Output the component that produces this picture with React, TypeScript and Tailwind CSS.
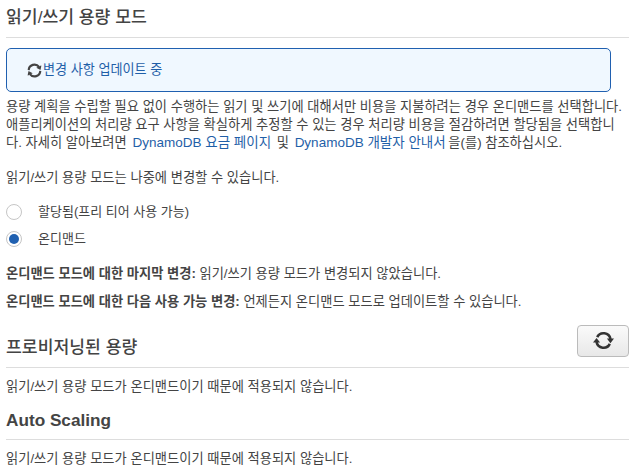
const FONT = "[font-family:'Liberation_Sans','Noto_Sans_CJK_KR',sans-serif]";

function RefreshIcon({ className }: { className: string }) {
  return (
    <svg viewBox="0 0 16 16" className={className} fill="none">
      <path d="M3.2 5.4A5.4 5.4 0 0 1 13.3 6.8" stroke="currentColor" strokeWidth="2" />
      <path d="M10.6 6.4h5.4L13.3 10z" fill="currentColor" />
      <path d="M12.8 10.6A5.4 5.4 0 0 1 2.7 9.2" stroke="currentColor" strokeWidth="2" />
      <path d="M5.4 9.6H0L2.7 6z" fill="currentColor" />
    </svg>
  );
}

function Radio({ checked, label }: { checked?: boolean; label: string }) {
  return (
    <label className="flex items-center h-[27px]">
      <span className="flex items-center justify-center w-4 h-4 rounded-full border border-[#c6c6c6] bg-white">
        {checked && <span className="w-[10px] h-[10px] rounded-full bg-[#2060b0]" />}
      </span>
      <span className="ml-4 text-[13px]">{label}</span>
    </label>
  );
}

export default function App() {
  return (
    <div className={`${FONT} w-[639px] h-[470px] overflow-hidden bg-white pl-[6px] pr-[10px] text-[13.25px] leading-[18px] text-[#444]`}>
      <h2 className="h-[38px] pt-[7px] text-[17.2px] leading-[20px] font-medium border-b border-[#ddd]">읽기/쓰기 용량 모드</h2>

      <div className="mt-[10px] mr-[18px] h-[44px] flex items-center pl-[19px] rounded-[5px] border border-[#2060b0] bg-[#f0f8ff] text-[13.1px] text-[#1f5fa8]">
        <RefreshIcon className="w-[17px] h-[17px] -rotate-[25deg] text-[#444]" />
        <span>변경 사항 업데이트 중</span>
      </div>

      <p className="mt-[6px] whitespace-nowrap">
        용량 계획을 수립할 필요 없이 수행하는 읽기 및 쓰기에 대해서만 비용을 지불하려는 경우 온디맨드를 선택합니다.
        <br />
        애플리케이션의 처리량 요구 사항을 확실하게 추정할 수 있는 경우 처리량 비용을 절감하려면 할당됨을 선택합니
        <br />
        다. 자세히 알아보려면 <a className="mx-[2px] text-[13.5px] text-[#1f5fa8]">DynamoDB 요금 페이지</a> 및 <a className="ml-[2px] -mr-[1px] text-[13.5px] text-[#1f5fa8]">DynamoDB 개발자 안내서</a> 을(를) 참조하십시오.
      </p>

      <p className="mt-[17px]">읽기/쓰기 용량 모드는 나중에 변경할 수 있습니다.</p>

      <div className="mt-[11px]">
        <Radio label="할당됨(프리 티어 사용 가능)" />
        <Radio checked label="온디맨드" />
      </div>

      <p className="mt-[13px]"><b>온디맨드 모드에 대한 마지막 변경:</b> 읽기/쓰기 용량 모드가 변경되지 않았습니다.</p>
      <p className="mt-[10px]"><b>온디맨드 모드에 대한 다음 사용 가능 변경:</b> 언제든지 온디맨드 모드로 업데이트할 수 있습니다.</p>

      <div className="mt-[11px] h-[46px] flex items-center justify-between border-b border-[#ddd]">
        <h2 className="text-[17.2px] leading-[20px] pt-[5px] font-medium">프로비저닝된 용량</h2>
        <button className="w-[52px] h-[32px] mb-[8px] flex items-center justify-center rounded-[4px] border border-[#bbb] bg-gradient-to-b from-[#fafafa] to-[#e8e8e8] text-[#333]">
          <RefreshIcon className="w-[21px] h-[21px]" />
        </button>
      </div>
      <p className="mt-[10px]">읽기/쓰기 용량 모드가 온디맨드이기 때문에 적용되지 않습니다.</p>

      <h2 className="mt-[14px] h-[30px] text-[17.2px] leading-[20px] font-bold border-b border-[#ddd]">Auto Scaling</h2>
      <p className="mt-[10px]">읽기/쓰기 용량 모드가 온디맨드이기 때문에 적용되지 않습니다.</p>
    </div>
  );
}
